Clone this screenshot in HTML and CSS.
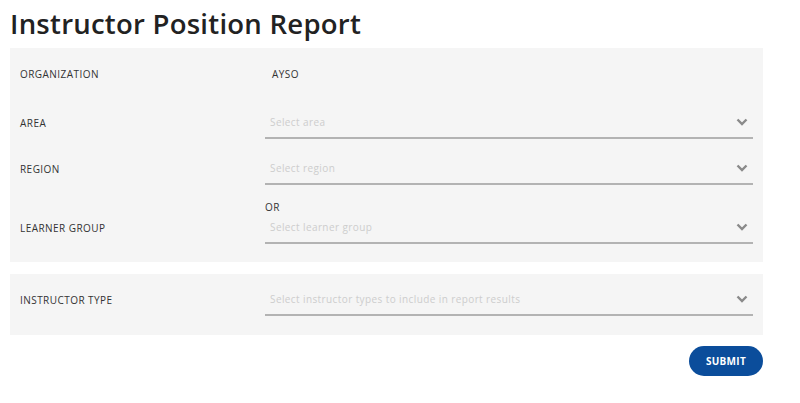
FILE: index.html
```html
<!DOCTYPE html>
<html>
<head>
<meta charset="utf-8">
<link rel="stylesheet" href="styles.css">
</head>
<body>
<div class="page">
  <h1 class="title">Instructor Position Report</h1>
  <section class="panel panel-main">
    <div class="row row-static">
      <div class="label">ORGANIZATION</div>
      <div class="value">AYSO</div>
    </div>
    <div class="row row-area">
      <div class="label">AREA</div>
      <div class="field"><span class="placeholder">Select area</span><svg class="chev" viewBox="0 0 12 8" width="12" height="8"><path d="M1.5 1.5 L6 6 L10.5 1.5" fill="none" stroke="#8a8a8a" stroke-width="2.4"/></svg></div>
    </div>
    <div class="row row-region">
      <div class="label">REGION</div>
      <div class="field"><span class="placeholder">Select region</span><svg class="chev" viewBox="0 0 12 8" width="12" height="8"><path d="M1.5 1.5 L6 6 L10.5 1.5" fill="none" stroke="#8a8a8a" stroke-width="2.4"/></svg></div>
    </div>
    <div class="or-row">
      <div></div>
      <div class="or">OR</div>
    </div>
    <div class="row">
      <div class="label">LEARNER GROUP</div>
      <div class="field"><span class="placeholder">Select learner group</span><svg class="chev" viewBox="0 0 12 8" width="12" height="8"><path d="M1.5 1.5 L6 6 L10.5 1.5" fill="none" stroke="#8a8a8a" stroke-width="2.4"/></svg></div>
    </div>
  </section>
  <section class="panel panel-type">
    <div class="row">
      <div class="label">INSTRUCTOR TYPE</div>
      <div class="field"><span class="placeholder">Select instructor types to include in report results</span><svg class="chev" viewBox="0 0 12 8" width="12" height="8"><path d="M1.5 1.5 L6 6 L10.5 1.5" fill="none" stroke="#8a8a8a" stroke-width="2.4"/></svg></div>
    </div>
  </section>
  <div class="actions">
    <button class="submit">SUBMIT</button>
  </div>
</div>
</body>
</html>
```
FILE: styles.css
```css
* { box-sizing: border-box; }
html, body { margin: 0; padding: 0; background: #fff; }
body { font-family: "Open Sans", "DejaVu Sans", sans-serif; color: #333; }
.page { width: 763px; padding: 0 0 0 10px; }
.title {
  margin: 0;
  height: 48px;
  padding-top: 6px;
  font-size: 27.5px;
  font-weight: 600;
  color: #222;
  line-height: 36px;
  letter-spacing: 0.25px;
}
.panel { background: #f5f5f5; padding: 0 10px; }
.panel-main { padding-top: 14px; padding-bottom: 18px; }
.panel-type { margin-top: 12px; padding-top: 12px; padding-bottom: 19px; }
.row {
  display: grid;
  grid-template-columns: 245px 1fr;
  align-items: center;
}
.row-static { height: 24px; }
.row-area { margin-top: 23px; }
.row-region { margin-top: 16px; }
.label { font-size: 10px; color: #333; letter-spacing: 0.45px; }
.row .label { padding-bottom: 3px; }
.row-static .label { padding-bottom: 0; }
.value { font-size: 10px; color: #333; padding-left: 7px; letter-spacing: 0.45px; }
.field {
  height: 30px;
  border-bottom: 2px solid #b3b3b3;
  display: flex;
  align-items: center;
  justify-content: space-between;
  padding: 0 5px 3px 5px;
}
.placeholder { font-size: 10px; color: #cdcdcd; letter-spacing: 0.4px; }
.chev { display: block; }
.or-row {
  display: grid;
  grid-template-columns: 245px 1fr;
  margin-top: 15px;
  height: 14px;
  line-height: 14px;
}
.or { font-size: 10px; color: #333; letter-spacing: 0.45px; }
.actions { display: flex; justify-content: flex-end; margin-top: 11px; }
.submit {
  width: 74px;
  height: 30px;
  border: none;
  border-radius: 15px;
  background: #0b4d9b;
  color: #fff;
  font-family: "Open Sans", "DejaVu Sans", sans-serif;
  font-weight: 700;
  font-size: 10px;
  letter-spacing: 0.3px;
  padding: 0;
}
```
